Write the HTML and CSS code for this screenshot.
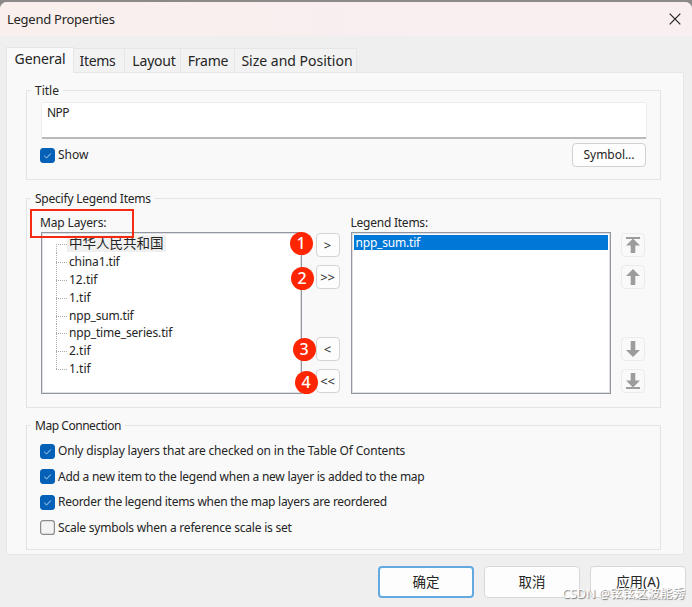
FILE: index.html
```html
<!DOCTYPE html>
<html lang="en">
<head>
<meta charset="utf-8">
<title>Legend Properties</title>
<link rel="stylesheet" href="styles.css">
</head>
<body>
<main class="dialog">
  <header class="titlebar">
    <h1 class="titlebar-text">Legend Properties</h1>
    <svg class="close" viewBox="0 0 12 12"><path d="M.7.7 11.3 11.3M11.3.7.7 11.3"/></svg>
  </header>
  <nav class="tabs">
    <span class="tab active">General</span>
    <span class="tab items">Items</span>
    <span class="tab layout">Layout</span>
    <span class="tab frame">Frame</span>
    <span class="tab size">Size and Position</span>
  </nav>
  <section class="panel">
    <section class="group group-title">
      <h2 class="legend">Title</h2>
      <div class="field"><span class="t-npp">NPP</span></div>
      <div class="title-row">
        <label class="check"><svg class="box" viewBox="0 0 15 15"><rect class="on" x=".5" y=".5" width="14" height="14" rx="2.5"/><path d="M4.3 7.8 6.6 10 10.8 5.5"/></svg><span>Show</span></label>
        <button class="symbol"><span class="t-symbol">Symbol...</span></button>
      </div>
    </section>

    <section class="group group-items">
      <h2 class="legend t-specify">Specify Legend Items</h2>
      <div class="columns">
        <div class="layers">
          <div class="caption"><span class="t-map">Map Layers:</span><i class="highlight"></i></div>
          <ul class="list tree">
            <li><span class="zh">中华人民共和国</span></li>
            <li><span class="t-china">china1.tif</span></li>
            <li><span>12.tif</span></li>
            <li><span>1.tif</span></li>
            <li><span class="t-sum">npp_sum.tif</span></li>
            <li><span class="t-series">npp_time_series.tif</span></li>
            <li><span>2.tif</span></li>
            <li><span>1.tif</span></li>
          </ul>
        </div>
        <div class="moves">
          <button class="move">&gt;<b class="badge b1">1</b></button>
          <button class="move">&gt;&gt;<b class="badge b2">2</b></button>
          <button class="move">&lt;<b class="badge b3">3</b></button>
          <button class="move">&lt;&lt;<b class="badge b4">4</b></button>
        </div>
        <div class="chosen">
          <div class="caption"><span class="t-legend">Legend Items:</span></div>
          <ul class="list selected"><li><span class="t-sum">npp_sum.tif</span></li></ul>
        </div>
        <div class="moves order">
          <button class="move faint"><svg viewBox="0 0 14 16"><path d="M0 0h14v2H0zM7 1.5 14 8.500H9.300V16H4.700V8.500H0z"/></svg></button>
          <button class="move faint"><svg viewBox="0 0 14 16"><path d="M7 0 14 7H9.300V16H4.700V7H0z"/></svg></button>
          <button class="move faint"><svg viewBox="0 0 14 16"><path d="M7 16 14 9H9.300V0H4.700V9H0z"/></svg></button>
          <button class="move faint"><svg viewBox="0 0 14 16"><path d="M0 14h14v2H0zM7 14.500 14 7.500H9.300V0H4.700V7.500H0z"/></svg></button>
        </div>
      </div>
    </section>

    <section class="group group-connection">
      <h2 class="legend t-connection">Map Connection</h2>
      <div class="checks">
        <label class="check"><svg class="box" viewBox="0 0 15 15"><rect class="on" x=".5" y=".5" width="14" height="14" rx="2.5"/><path d="M4.300 7.800 6.600 10 10.800 5.500"/></svg><span class="t-c1">Only display layers that are checked on in the Table Of Contents</span></label>
        <label class="check"><svg class="box" viewBox="0 0 15 15"><rect class="on" x=".5" y=".5" width="14" height="14" rx="2.5"/><path d="M4.300 7.800 6.600 10 10.800 5.500"/></svg><span class="t-c2">Add a new item to the legend when a new layer is added to the map</span></label>
        <label class="check"><svg class="box" viewBox="0 0 15 15"><rect class="on" x=".5" y=".5" width="14" height="14" rx="2.5"/><path d="M4.300 7.800 6.600 10 10.800 5.500"/></svg><span class="t-c3">Reorder the legend items when the map layers are reordered</span></label>
        <label class="check"><svg class="box" viewBox="0 0 15 15"><rect class="off" x=".6" y=".6" width="13.8" height="13.8" rx="2.5"/></svg><span class="t-c4">Scale symbols when a reference scale is set</span></label>
      </div>
    </section>
  </section>
  <footer class="actions">
    <button class="action primary">确定</button>
    <button class="action">取消</button>
    <button class="action">应用(A)</button>
  </footer>
  <div class="watermark">CSDN @铉铉这波能秀</div>
</main>
</body>
</html>
```
FILE: styles.css
```css
* { box-sizing: border-box; }
body {
  margin: 0;
  padding-top: 2px;
  width: 692px;
  height: 607px;
  overflow: hidden;
  background: #8c8989;
  color: #252525;
  font: 12px/18px "Noto Sans", "Noto Sans CJK SC", sans-serif;
}
h1, h2, ul { margin: 0; padding: 0; font-weight: 400; list-style: none; }
span { white-space: nowrap; }
button { padding: 0; font: inherit; color: inherit; }

.dialog {
  position: relative;
  height: 605px;
  background: #efefef;
  border-radius: 7px 7px 0 0;
  overflow: hidden;
}
.titlebar {
  display: flex;
  align-items: center;
  justify-content: space-between;
  height: 34px;
  padding: 0 11px 0 7px;
  background: linear-gradient(90deg, #f9f0ed, #f9eef0 60%);
}
.titlebar-text { font-size: 13px; letter-spacing: -.26px; }
.close { width: 12px; height: 12px; fill: none; stroke: #222; stroke-width: 1.2; }

.tabs { display: flex; align-items: flex-end; height: 36px; padding-left: 6px; }
.tab {
  height: 24px;
  border: 1px solid #e6e6e6;
  border-left: 0;
  border-bottom: 0;
  background: #f2f2f2;
  font-size: 14px;
  line-height: 23px;
  text-align: center;
}
.active {
  position: relative;
  width: 68px;
  height: 26px;
  margin-bottom: -1px;
  border-left: 1px solid #e6e6e6;
  background: #f9f9f9;
  line-height: 21px;
  letter-spacing: -.1px;
}
.items { width: 51px; padding-right: 3px; letter-spacing: -.3px; }
.layout { width: 56px; padding-left: 3px; letter-spacing: -.2px; }
.frame { width: 54px; padding-left: 1px; letter-spacing: -.2px; }
.size { width: 122px; padding-left: 3px; }

.panel {
  display: flex;
  flex-direction: column;
  width: 678px;
  height: 483px;
  margin-left: 6px;
  padding: 17px 22px 0 19px;
  border: 1px solid #e6e6e6;
  background: #f9f9f9;
}
.group { width: 635px; border: 1px solid #e4e4e4; }
.group-title { height: 90px; }
.group-items { height: 210px; margin: 18px 0 17px; }
.group-connection { height: 125px; }
.legend {
  width: max-content;
  height: 18px;
  margin: -9px 0 0 4px;
  padding: 0 4px;
  background: #f9f9f9;
  font-size: 12px;
  white-space: nowrap;
}
.field {
  width: 606px;
  height: 37px;
  margin: 2px 0 0 14px;
  padding: 1px 5px;
  border: 1px solid #ededed;
  border-bottom: 2px solid #b9b9b9;
  border-radius: 2px;
  background: #fff;
}
.title-row { display: flex; justify-content: space-between; padding: 4px 14px 0 13px; }
.check { display: flex; align-items: center; gap: 3px; height: 24px; }
.box { width: 15px; height: 15px; fill: none; stroke: #b9d8f2; }
.on { fill: #0560b7; stroke: #0560b7; }
.off { fill: #f3f3f3; stroke: #8b8b8b; stroke-width: 1.2; }
.symbol { width: 74px; height: 24px; border: 1px solid #d1d1d1; border-radius: 4px; background: #fdfdfd; }

.t-npp { letter-spacing: -.6px; }
.t-symbol { letter-spacing: -.05px; }
.t-specify { letter-spacing: -.22px; }
.t-connection { letter-spacing: -.46px; }
.t-map { letter-spacing: -.15px; }
.t-legend { letter-spacing: -.24px; }
.t-china { letter-spacing: -.15px; }
.t-sum { letter-spacing: -.2px; }
.t-series { letter-spacing: -.15px; }
.t-c1 { letter-spacing: -.175px; }
.t-c2 { letter-spacing: -.245px; }
.t-c3 { letter-spacing: -.275px; }
.t-c4 { letter-spacing: -.21px; }

.columns { display: flex; padding: 6px 0 0 14px; }
.layers, .chosen { width: 261px; }
.caption { position: relative; height: 18px; }
.layers .caption { margin-left: -1px; }
.highlight {
  position: absolute;
  z-index: 2;
  left: -10px;
  top: -5px;
  width: 104px;
  height: 29px;
  border: 2px solid #f62a10;
}
.list { height: 162px; border: 1px solid #9297a0; background: #fff; box-shadow: inset 0 0 0 1px #dedfe2; }
.tree { padding: 2px 0 0 14px; }
.tree li {
  display: flex;
  align-items: center;
  height: 17.9px;
  background:
    repeating-linear-gradient(90deg, #aaa 0 1px, transparent 1px 2px) 0 9px / 11px 1px no-repeat,
    repeating-linear-gradient(#aaa 0 1px, transparent 1px 2px) 0 0 / 1px 18px no-repeat;
  padding-left: 13px;
}
.tree li:first-child { background-position: 0 9px, 0 9px; }
.tree li:last-child { background-size: 11px 1px, 1px 10px; }
.zh { margin-left: -2px; padding: 0 2px; background: #f0f0f0; font-size: 13.500px; line-height: 17px; }
.selected { padding: 2px; }
.selected li { height: 15px; padding-left: 2px; background: #0078d7; color: #fff; line-height: 15px; }

.moves {
  display: grid;
  grid-template-rows: 24px 24px 24px 24px;
  row-gap: 8px;
  align-content: start;
  width: 49px;
  padding: 19px 0 0 14px;
}
.move {
  position: relative;
  width: 24px;
  height: 24px;
  border: 1px solid #d4d4d4;
  border-radius: 4px;
  background: #fdfdfd;
  line-height: 21px;
  font-size: 13px;
}
.move:nth-child(3) { margin-top: 40px; }
.move:nth-child(4) { margin-top: 40px; }
.order { padding-left: 10px; }
.faint { display: grid; place-items: center; border-color: #ebebeb; background: #f9f9f9; }
.faint svg { width: 14px; height: 16px; margin-top: -1px; fill: #9c9c9c; }
.badge {
  position: absolute;
  width: 23px;
  height: 23px;
  border-radius: 50%;
  background: #fe2500;
  color: #fff;
  font-weight: 500;
  font-size: 16px;
  line-height: 22px;
  text-align: center;
}
.b1 { left: -27px; top: -2px; }
.b2 { left: -26px; top: 1px; }
.b3 { left: -24px; top: 0; }
.b4 { left: -22px; top: 1px; }

.checks { display: flex; flex-direction: column; gap: 1.6px; padding: 4px 0 0 13px; }
.actions { display: flex; justify-content: flex-end; gap: 10px; padding: 11px 6px 0 0; }
.action { width: 96px; height: 32px; border: 1px solid #d8d8d8; border-radius: 4px; background: #fdfdfd; font-size: 13.500px; }
.primary { border: 2px solid #62a9df; }
.watermark {
  position: absolute;
  right: 7px;
  bottom: 4px;
  color: #fff;
  font-size: 12.500px;
  text-shadow: 1px 1px 1px #777;
  white-space: nowrap;
}
```
